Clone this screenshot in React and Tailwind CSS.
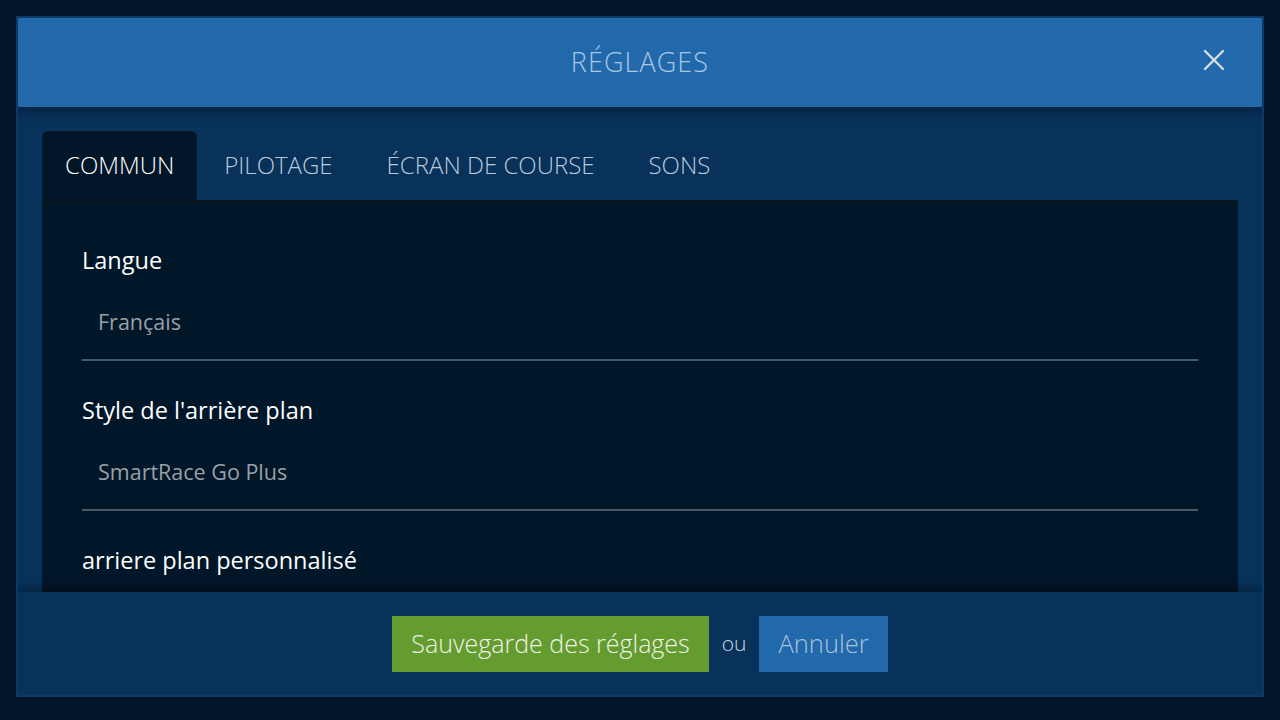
import React, { useState } from 'react';

const tabs = ['Commun', 'Pilotage', 'Écran de course', 'Sons'];

const fields = [
    { label: 'Langue', value: 'Français' },
    { label: "Style de l'arrière plan", value: 'SmartRace Go Plus' },
    { label: 'arriere plan personnalisé', value: '' },
];

export default function App() {
    const [active, setActive] = useState(0);

    return (
        <div className="w-[1280px] h-[720px] bg-[#001528] p-4 font-['Open_Sans',sans-serif] antialiased">
            <div className="h-[681px] border-2 border-[#0b3a66] bg-[#08325a] flex flex-col overflow-hidden">

                {/* Header */}
                <div className="relative z-10 h-[89px] shrink-0 bg-[#2169aa] flex items-center justify-center shadow-[0_4px_10px_rgba(0,0,0,0.35)]">
                    <h1 className="text-[27px] font-light tracking-[0.04em] text-[#a9c6e4] uppercase">Réglages</h1>
                    <button className="absolute right-[36px] top-[30px] text-[#d6dde4]">
                        <svg width="24" height="24" viewBox="0 0 24 24" fill="none" stroke="currentColor" strokeWidth="2.4" strokeLinecap="round">
                            <path d="M3 3L21 21M21 3L3 21" />
                        </svg>
                    </button>
                </div>

                {/* Body */}
                <div className="flex-1 min-h-0 px-6 pt-6 flex flex-col">
                    <div className="flex h-[69px] shrink-0">
                        {tabs.map((t, i) => (
                            <button
                                key={t}
                                onClick={() => setActive(i)}
                                className={
                                    i === active
                                        ? 'px-[22px] pb-[2px] rounded-t-md bg-[#001528] border border-b-0 border-[#0c1a26] text-[24px] font-light uppercase text-white'
                                        : 'px-[27px] pb-[2px] text-[24px] font-light uppercase text-[#bccbdb]'
                                }
                            >
                                {t}
                            </button>
                        ))}
                    </div>
                    <div className="flex-1 min-h-0 bg-[#001629] border-t-2 border-[#0c1620] px-10 pt-[43px] overflow-hidden">
                        {fields.map((f) => (
                            <div key={f.label} className="mb-[34px]">
                                <div className="text-[23.5px] text-white leading-[30px]">{f.label}</div>
                                <div className="pl-4 pt-[32px] pb-[22px] text-[21.5px] text-[#9aa0a7] leading-[30px]">{f.value}</div>
                                <div className="h-[2px] bg-[#4c5a68]"></div>
                            </div>
                        ))}
                    </div>
                </div>

                {/* Footer */}
                <div className="relative z-10 h-[103px] shrink-0 bg-[#08325a] flex items-center justify-center gap-[13px] shadow-[0_-4px_10px_rgba(0,0,0,0.35)]">
                    <button className="h-[56px] px-[19px] bg-[#659c2f] text-[25px] font-light text-[#eef3e8]">Sauvegarde des réglages</button>
                    <span className="text-[21px] font-light text-[#c9d6e3]">ou</span>
                    <button className="h-[56px] px-[19px] bg-[#2169aa] text-[25.5px] font-light text-[#a9c2da]">Annuler</button>
                </div>
            </div>
        </div>
    );
}
